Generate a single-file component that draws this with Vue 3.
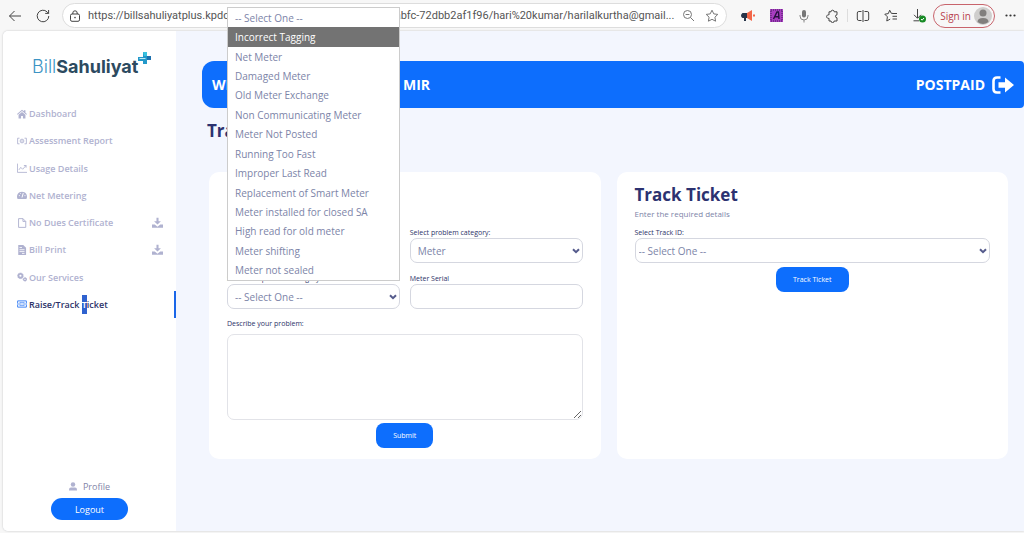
<script setup>
import { ref } from 'vue'

const url = ref('https://billsahuliyatplus.kpdcl.net/ticket/raise/new/4f1e8a62d-abfc-72dbb2af1f96/hari%20kumar/harilalkurtha@gmail...')

const nav = [
  { label: 'Dashboard', icon: 'home' },
  { label: 'Assessment Report', icon: 'bill' },
  { label: 'Usage Details', icon: 'chart' },
  { label: 'Net Metering', icon: 'gauge' },
  { label: 'No Dues Certificate', icon: 'file', download: true },
  { label: 'Bill Print', icon: 'invoice', download: true },
  { label: 'Our Services', icon: 'gears' },
]

const problems = [
  '-- Select One --',
  'Incorrect Tagging',
  'Net Meter',
  'Damaged Meter',
  'Old Meter Exchange',
  'Non Communicating Meter',
  'Meter Not Posted',
  'Running Too Fast',
  'Improper Last Read',
  'Replacement of Smart Meter',
  'Meter installed for closed SA',
  'High read for old meter',
  'Meter shifting',
  'Meter not sealed',
]
const highlighted = ref(1)
</script>

<template>
  <div class="browser">
    <header class="toolbar">
      <button class="tool" aria-label="Back">
        <svg width="14" height="14" viewBox="0 0 14 14"><path d="M13 7H1.5M6.5 2L1.5 7l5 5" /></svg>
      </button>
      <button class="tool" aria-label="Reload">
        <svg width="14" height="14" viewBox="0 0 14 14"><path d="M12.8 7a5.8 5.8 0 1 1-1.7-4.1L12.6 4.4M12.6 1v3.4H9.2" /></svg>
      </button>
      <div class="address">
        <svg width="12" height="12" viewBox="0 0 12 12"><rect x="1.5" y="4" width="9" height="7.3" rx="1.5" /><path d="M3.8 4V3a2.2 2.2 0 0 1 4.4 0v1" /><circle cx="6" cy="7.6" r=".8" fill="#444" stroke="none" /></svg>
        <input v-model="url" aria-label="Address" type="text" />
        <button class="tool" aria-label="Zoom out">
          <svg class="soft" width="13" height="13" viewBox="0 0 13 13"><circle cx="5.5" cy="5.5" r="4" /><path d="M8.5 8.5L12 12M3.6 5.5h3.8" /></svg>
        </button>
        <button class="tool" aria-label="Add to favorites">
          <svg class="soft" width="14" height="14" viewBox="0 0 14 14"><path d="M7 1.2l1.8 3.7 4 .5-2.9 2.8.7 4L7 10.3l-3.6 1.9.7-4L1.2 5.4l4-.5z" /></svg>
        </button>
      </div>
      <div class="tools">
        <button class="tool" aria-label="Announcements">
          <svg class="flat" width="14" height="12" viewBox="0 0 14 12"><path d="M1.5 3H6v5H5v3H3V8H1.5Q0 7 0 5.500T1.500 3z" fill="#273449" /><path d="M6 3l5-3v11L6 8z" fill="#f26648" /><path d="M12 4.500h2v2h-2z" fill="#f26648" /></svg>
        </button>
        <button class="tool" aria-label="Font extension">
          <svg class="flat" width="13" height="13" viewBox="0 0 13 13"><rect width="13" height="13" fill="#a83dc0" /><rect x="1" y="1" width="11" height="11" fill="none" stroke="#40205c" stroke-dasharray="1 1" /><path d="M3.500 10L7 3h1.500L9 10M4.800 7.800h4" fill="none" stroke="#281040" stroke-width="1.400" /></svg>
        </button>
        <button class="tool" aria-label="Voice">
          <svg class="flat" width="10" height="14" viewBox="0 0 10 14"><rect x="3" y="1" width="4" height="7.500" rx="2" fill="#777" /><path d="M1 6v1a4 4 0 0 0 8 0V6M5 11v2.500" fill="none" stroke="#888" /></svg>
        </button>
        <button class="tool" aria-label="Extensions">
          <svg width="13" height="14" viewBox="0 0 13 14"><path d="M3 2.800h2a1.600 1.600 0 0 1 3.200 0H11v3a1.500 1.500 0 0 0 0 3V12H8.200a1.600 1.600 0 0 1-3.200 0H3V9.300a1.800 1.800 0 1 1 0-3.400z" /></svg>
        </button>
        <i class="rule"></i>
        <button class="tool" aria-label="Split screen">
          <svg width="14" height="14" viewBox="0 0 14 14"><path d="M5.500 2.500H2.800Q1.300 2.500 1.300 4v6q0 1.500 1.500 1.500h2.700M8.500 2.500h2.700q1.500 0 1.500 1.500v6q0 1.500-1.500 1.500H8.500M7 1v12" /></svg>
        </button>
        <button class="tool" aria-label="Favorites">
          <svg width="14" height="14" viewBox="0 0 14 14"><path d="M9.500 4.500L7.300 4.300 5.700 1.200 4.300 4.600.8 5.200l2.600 2.600L2.800 12l3.400-1.900M8.800 4.500H13M8.500 7.300H13M8.500 10H13" /></svg>
        </button>
        <button class="tool" aria-label="Downloads">
          <svg width="14" height="15" viewBox="0 0 14 15"><path d="M5.500 1v9M2 6.800l3.500 3.500L9 6.800M1.500 12.800H7" /><circle cx="10.500" cy="11" r="3.500" fill="#168a24" stroke="none" /><path d="M9 11l1.100 1.200L12 10" stroke="#fff" /></svg>
        </button>
      </div>
      <button class="signin">
        Sign in
        <svg class="flat" width="18" height="18" viewBox="0 0 18 18"><circle cx="9" cy="9" r="9" fill="#cfcecd" /><circle cx="9" cy="6" r="3.500" fill="#817f7d" /><path d="M3.500 15Q3.500 11 9 11t5.500 4q-5.500 4-11 0z" fill="#817f7d" /></svg>
      </button>
      <button class="tool more" aria-label="More">
        <svg class="flat" width="11" height="3" viewBox="0 0 11 3"><g fill="#333"><circle cx="1.500" cy="1.500" r="1.100" /><circle cx="5.500" cy="1.500" r="1.100" /><circle cx="9.500" cy="1.500" r="1.100" /></g></svg>
      </button>
    </header>

    <div class="page">
      <aside>
        <div class="logo">
          <span class="thin">Bill</span><span class="fat">Sahuliyat</span>
          <svg class="flat" width="13" height="13" viewBox="0 0 13 13"><path d="M5 0h4v4h4v4H9v4H5V9H0V5h5z" fill="#2499ca" /><path d="M5 0h4v4H6z" fill="#39c2df" /><path d="M9 4h4v4H9z" fill="#1d70ae" /><path d="M1.500 6.500h6" stroke="#bde9f4" /></svg>
        </div>
        <nav>
          <a v-for="item in nav" :key="item.label" href="#">
            <svg class="flat" width="10" height="10" viewBox="0 0 16 16">
              <path v-if="item.icon === 'home'" d="M0 8l8-7 3 2.600V2h2.500v4L16 8l-1 1.200L8 3.200 1 9.200zM2.500 9.300L8 4.700l5.500 4.600V15h-4v-4h-3v4h-4z" />
              <g v-else-if="item.icon === 'bill'" fill="none" stroke="currentColor" stroke-width="1.400"><path d="M4 3.500H1v9h3M12 3.500h3v9h-3" /><circle cx="8" cy="8" r="3" /><path d="M8 6v4" /></g>
              <path v-else-if="item.icon === 'chart'" d="M.7 1v14H16M3 11l3-4 3 3 5.500-6M11 4h3.500v3.500" fill="none" stroke="currentColor" stroke-width="1.400" />
              <g v-else-if="item.icon === 'gauge'"><path d="M1 14.500a8 8 0 1 1 14 0z" /><path d="M8 12l2-7M3 9h1.500M12 9h1.500M5 5l1 1" fill="none" stroke="#fff" stroke-width="1.600" /></g>
              <path v-else-if="item.icon === 'file'" d="M2.500 1h7L14 5.500V15H2.500zM9.500 1v4.500H14" fill="none" stroke="currentColor" stroke-width="1.500" />
              <g v-else-if="item.icon === 'invoice'"><path d="M2 0h8l4.500 4.500V16H2z" /><path d="M4 4h4M4 7.500h8M4 10.500h8M8 13.500h4" stroke="#fff" stroke-width="1.300" /></g>
              <g v-else><circle cx="5.500" cy="6" r="4.600" stroke="currentColor" stroke-dasharray="2 1.500" /><circle cx="5.500" cy="6" r="1.700" fill="#fff" /><circle cx="12.700" cy="11.700" r="3" stroke="currentColor" stroke-dasharray="1.500 1" /><circle cx="12.700" cy="11.700" r="1.100" fill="#fff" /></g>
            </svg>
            <span>{{ item.label }}</span>
            <svg v-if="item.download" class="flat down" width="11" height="11" viewBox="0 0 16 16"><path d="M6.500 1h3v5H13l-5 5-5-5h3.500zM0 11h4l4 3 4-3h4v4.500H0z" /></svg>
          </a>
          <a href="#" class="active" aria-current="page">
            <svg class="flat" width="10" height="10" viewBox="0 0 16 16"><path d="M1 3h14v3.500q-2 1.500 0 3V13H1V9.500q2-1.500 0-3z" fill="none" stroke="#4386f5" stroke-width="1.600" /><path d="M4.500 5.500h7v5h-7z" fill="#cfe0fd" stroke="#4386f5" /></svg>
            <span>Raise/Track <mark>T</mark>icket</span>
          </a>
        </nav>
        <div class="account">
          <a href="#"><svg class="flat" width="8" height="9" viewBox="0 0 16 18"><circle cx="8" cy="5" r="4.500" /><path d="M0 17v-2q0-4 4-4h8q4 0 4 4v2z" /></svg>Profile</a>
          <button>Logout</button>
        </div>
      </aside>

      <main>
        <div class="banner">
          <span class="hello">WELCOME</span><span>MIR</span>
          <a href="#" class="plan">POSTPAID
            <svg class="flat" width="22" height="18" viewBox="0 0 22 18"><path d="M8.500 1.500H5Q1.500 1.500 1.500 5v8Q1.500 16.500 5 16.500h3.500" fill="none" stroke="#fff" stroke-width="2.600" /><path d="M6.500 6.200H13V1.500L22 9l-9 7.500v-4.700H6.500z" fill="#fff" /></svg>
          </a>
        </div>
        <h1>Track</h1>
        <div class="cards">
          <form class="card raise" @submit.prevent>
            <div class="fields">
              <div class="field second">
                <label for="category">Select problem category:</label>
                <div class="control">
                  <select id="category"><option>Meter</option></select>
                  <svg class="chevron" width="8" height="6" viewBox="0 0 8 6"><path d="M1 1.200l3 3 3-3" /></svg>
                </div>
              </div>
              <div class="field">
                <label for="sub">Select sub problem category:</label>
                <div class="control">
                  <select id="sub"><option>-- Select One --</option></select>
                  <svg class="chevron" width="8" height="6" viewBox="0 0 8 6"><path d="M1 1.200l3 3 3-3" /></svg>
                  <ul class="popup" role="listbox" aria-label="Sub problem category">
                    <li v-for="(p, i) in problems" :key="p" role="option" :aria-selected="i === highlighted" :class="{ on: i === highlighted }" @mouseenter="highlighted = i">{{ p }}</li>
                  </ul>
                </div>
              </div>
              <div class="field">
                <label for="serial">Meter Serial</label>
                <div class="control"><input id="serial" type="text" /></div>
              </div>
            </div>
            <div class="describe">
              <label for="problem">Describe your problem:</label>
              <textarea id="problem"></textarea>
            </div>
            <button class="action">Submit</button>
          </form>

          <form class="card" @submit.prevent>
            <h2>Track Ticket</h2>
            <p>Enter the required details</p>
            <div class="field">
              <label for="track">Select Track ID:</label>
              <div class="control">
                <select id="track" class="tight"><option>-- Select One --</option></select>
                <svg class="chevron" width="8" height="6" viewBox="0 0 8 6"><path d="M1 1.200l3 3 3-3" /></svg>
              </div>
            </div>
            <button class="action spaced">Track Ticket</button>
          </form>
        </div>
      </main>
    </div>
  </div>
</template>

<style>
body {
  background: #f7f7f7;
}
</style>

<style scoped>
* {
  box-sizing: border-box;
}
.browser {
  display: flex;
  flex-direction: column;
  min-height: 100vh;
  padding: 0 0 2px 3px;
  font-family: "Open Sans", "Noto Sans", sans-serif;
  font-size: 10px;
  color: #7c84a8;
}
button, input, select, textarea {
  font: inherit;
  color: inherit;
  margin: 0;
}
button {
  border: 0;
  padding: 0;
  background: none;
}
a {
  color: inherit;
  text-decoration: none;
}
svg {
  flex: none;
  display: block;
  fill: none;
  stroke: #444;
}
svg.soft {
  stroke: #777;
}
svg.flat {
  fill: currentColor;
  stroke: none;
}
.toolbar {
  display: flex;
  align-items: center;
  height: 31px;
  padding: 0 8px 0 5px;
  gap: 14px;
}
.address {
  flex: 1;
  display: flex;
  align-items: center;
  gap: 10px;
  height: 25px;
  margin-left: -2px;
  padding: 0 7px 0 6px;
  border: 1px solid #ddd;
  border-radius: 13px;
  background: #fff;
}
.address input {
  flex: 1;
  min-width: 0;
  height: 20px;
  padding: 0;
  border: 0;
  outline: 0;
  margin: 0 -4px 0 -3px;
  background: none;
  font-family: Roboto, "Open Sans", sans-serif;
  font-size: 11px;
  color: #555;
}
.tools {
  display: flex;
  align-items: center;
  gap: 14px;
}
.tools .tool {
  display: flex;
  justify-content: center;
  width: 14px;
}
.rule {
  width: 1px;
  height: 13px;
  margin: 0 -6px;
  background: #ddd;
}
.signin {
  display: flex;
  align-items: center;
  gap: 3px;
  height: 24px;
  margin-left: -7px;
  padding: 0 2px 0 6px;
  border: 1px solid #c8646c;
  border-radius: 12px;
  color: #b8434e;
}
.more {
  margin-left: -4px;
}
.page {
  flex: 1;
  display: flex;
  border-radius: 5px 0 0 5px;
  background: #f3f6fe;
  box-shadow: 0 0 2px #bbb;
}
aside {
  flex: none;
  width: 173px;
  display: flex;
  flex-direction: column;
  border-radius: 5px 0 0 5px;
  background: #fff;
}
.logo {
  display: flex;
  align-items: center;
  height: 44px;
  margin: 13px 0 12px;
  padding-left: 29px;
  font-family: Inter, sans-serif;
  font-size: 18px;
}
.thin {
  font-weight: 300;
  color: #3d94c4;
}
.fat {
  font-weight: 700;
  color: #2c4a60;
}
.logo svg {
  align-self: flex-start;
  margin-top: 8px;
}
nav {
  display: flex;
  flex-direction: column;
  min-height: 218px;
}
nav a {
  flex: 1;
  display: flex;
  align-items: center;
  gap: 2px;
  padding: 0 13px 0 14px;
  font-size: 9px;
  font-weight: 600;
  color: #b0b2d0;
}
nav .down {
  margin-left: auto;
}
nav .active {
  border-right: 2px solid #1a66e8;
  color: #2c3268;
}
mark {
  padding: 3px 0;
  background: #2f62cf;
  color: #fff;
}
.account {
  display: flex;
  flex-direction: column;
  align-items: center;
  gap: 3px;
  margin-top: auto;
  padding-bottom: 11px;
}
.account a {
  display: flex;
  align-items: center;
  gap: 6px;
  height: 18px;
  color: #8284a8;
  font-size: 9px;
}
.account a svg {
  color: #b0b2d0;
}
.account button {
  width: 77px;
  height: 22px;
  border-radius: 11px;
  background: #0d6efd;
  color: #fff;
  font-size: 9px;
}
main {
  flex: 1;
  min-width: 0;
  padding: 30px 0 0 26px;
}
.banner {
  display: flex;
  align-items: center;
  height: 47px;
  padding: 0 10px;
  border-radius: 12px 4px 4px 12px;
  background: #0d6efd;
  color: #fff;
  font-size: 14px;
  font-weight: 700;
}
.hello {
  width: 191px;
}
.plan {
  display: flex;
  align-items: center;
  gap: 7px;
  margin-left: auto;
}
h1, h2 {
  margin: 0;
  font-size: 17px;
  font-weight: 700;
  line-height: 26px;
  color: #2c3270;
}
h1 {
  padding: 10px 0 28px 5px;
}
.cards {
  display: grid;
  grid-template-columns: 1fr 1fr;
  gap: 16px;
  padding: 0 16px 0 7px;
}
.card {
  display: flex;
  flex-direction: column;
  padding: 10px 18px 11px;
  border-radius: 10px;
  background: #fff;
}
.raise {
  padding-top: 56px;
}
.card p {
  margin: 0 0 8px;
  font-size: 8px;
  line-height: 12px;
}
.fields {
  display: grid;
  grid-template-columns: 1fr 1fr;
  gap: 11px 10px;
}
.second {
  grid-column: 2;
}
label {
  display: block;
  font-size: 7px;
  line-height: 10px;
  color: #2c3268;
}
.control {
  position: relative;
}
.control select, .control input {
  display: block;
  width: 100%;
  height: 25px;
  padding: 0 7px;
  border: 1px solid #d5d7e0;
  border-radius: 7px;
  background: #fff;
  appearance: none;
}
.control .tight {
  padding-left: 3px;
}
.chevron {
  position: absolute;
  right: 3px;
  top: 10px;
  stroke: #555b8c;
  stroke-width: 2;
}
.popup {
  position: absolute;
  z-index: 2;
  left: 0;
  right: 0;
  bottom: calc(100% + 3px);
  display: flex;
  flex-direction: column;
  height: 274px;
  margin: 0;
  padding: 0;
  border: 1px solid #ccc;
  background: #fff;
  list-style: none;
}
.popup li {
  flex: 1;
  display: flex;
  align-items: center;
  padding-left: 7px;
}
.popup .on {
  background: #737373;
  color: #fff;
}
.describe {
  display: flex;
  flex-direction: column;
  gap: 5px;
  margin-top: 10px;
}
textarea {
  display: block;
  width: 100%;
  height: 86px;
  padding: 7px;
  border: 1px solid #e2e3e8;
  border-radius: 7px;
  resize: vertical;
}
.action {
  align-self: center;
  height: 25px;
  margin-top: 3px;
  padding: 0 17px;
  border-radius: 8px;
  background: #0d6efd;
  color: #fff;
  font-size: 7px;
}
.spaced {
  margin-top: 4px;
}
</style>
